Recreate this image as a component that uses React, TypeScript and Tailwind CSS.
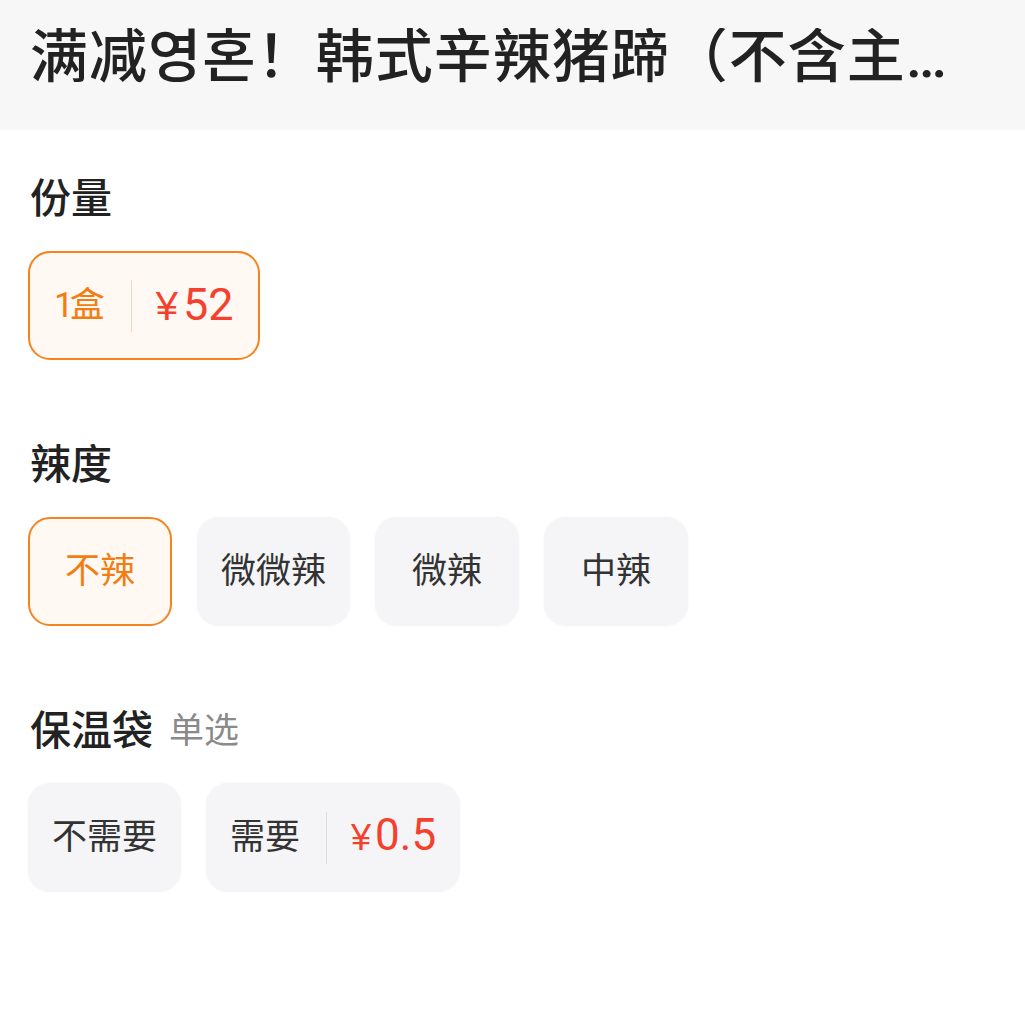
import type { ReactNode } from "react";

const FONT = "[font-family:Roboto,'Noto_Sans_CJK_SC',sans-serif]";

type ChipProps = {
  label: ReactNode;
  price?: { yuan: string; size: "lg" | "md" };
  active?: boolean;
};

function Chip({ label, price, active }: ChipProps) {
  const base =
    "flex h-[109px] min-w-[144px] items-center justify-center rounded-[22px] px-6";
  const tone = active
    ? "border-2 border-[#f5831e] bg-[#fff8f3] text-[#f27d12]"
    : "bg-[#f5f5f7] text-[#333333] shadow-[0_0_3px_rgba(0,0,0,0.04)]";

  return (
    <div className={`${base} ${tone}`}>
      <span className="text-[35px] leading-none">{label}</span>
      {price && (
        <>
          <span
            className={`ml-[26px] mr-[24px] h-[52px] w-px ${active ? "bg-[#efd9c4]" : "bg-[#dddddd]"}`}
          />
          <span className="flex items-baseline text-[#f4412d]">
            <span
              className={`font-medium [font-family:'Liberation_Sans',sans-serif] ${price.size === "lg" ? "mr-[5px] text-[40px]" : "mr-[4px] text-[36px]"}`}
            >
              ¥
            </span>
            <span className={price.size === "lg" ? "text-[45px] leading-none" : "text-[44px] leading-none"}>
              {price.yuan}
            </span>
          </span>
        </>
      )}
    </div>
  );
}

function Section({ title, hint, children }: { title: string; hint?: string; children: ReactNode }) {
  return (
    <section className="flex flex-col gap-[32px]">
      <div className="flex items-end gap-[16px] pl-[2px]">
        <h2 className="text-[41px] font-medium leading-[40px] text-[#222222]">{title}</h2>
        {hint && <span className="text-[35px] leading-[38px] text-[#8a8a8a]">{hint}</span>}
      </div>
      <div className="flex flex-wrap gap-[25px]">{children}</div>
    </section>
  );
}

export default function App() {
  return (
    <div className={`${FONT} min-h-[1025px] w-[1025px] bg-white`}>
      <header className="flex h-[130px] items-center bg-[#f7f7f7] px-[30px] pb-4">
        <h1 className="truncate text-[58px] font-medium leading-none tracking-[1px] text-[#222222]">
          满减영혼！韩式辛辣猪蹄（不含主食）
        </h1>
      </header>

      <main className="flex flex-col gap-[85px] px-[28px] pt-[49px]">
        <Section title="份量">
          <Chip
            label={
              <>
                <span className="tracking-[-4px]">1</span>盒
              </>
            }
            price={{ yuan: "52", size: "lg" }}
            active
          />
        </Section>

        <Section title="辣度">
          <Chip label="不辣" active />
          <Chip label="微微辣" />
          <Chip label="微辣" />
          <Chip label="中辣" />
        </Section>

        <Section title="保温袋" hint="单选">
          <Chip label="不需要" />
          <Chip label="需要" price={{ yuan: "0.5", size: "md" }} />
        </Section>
      </main>
    </div>
  );
}
